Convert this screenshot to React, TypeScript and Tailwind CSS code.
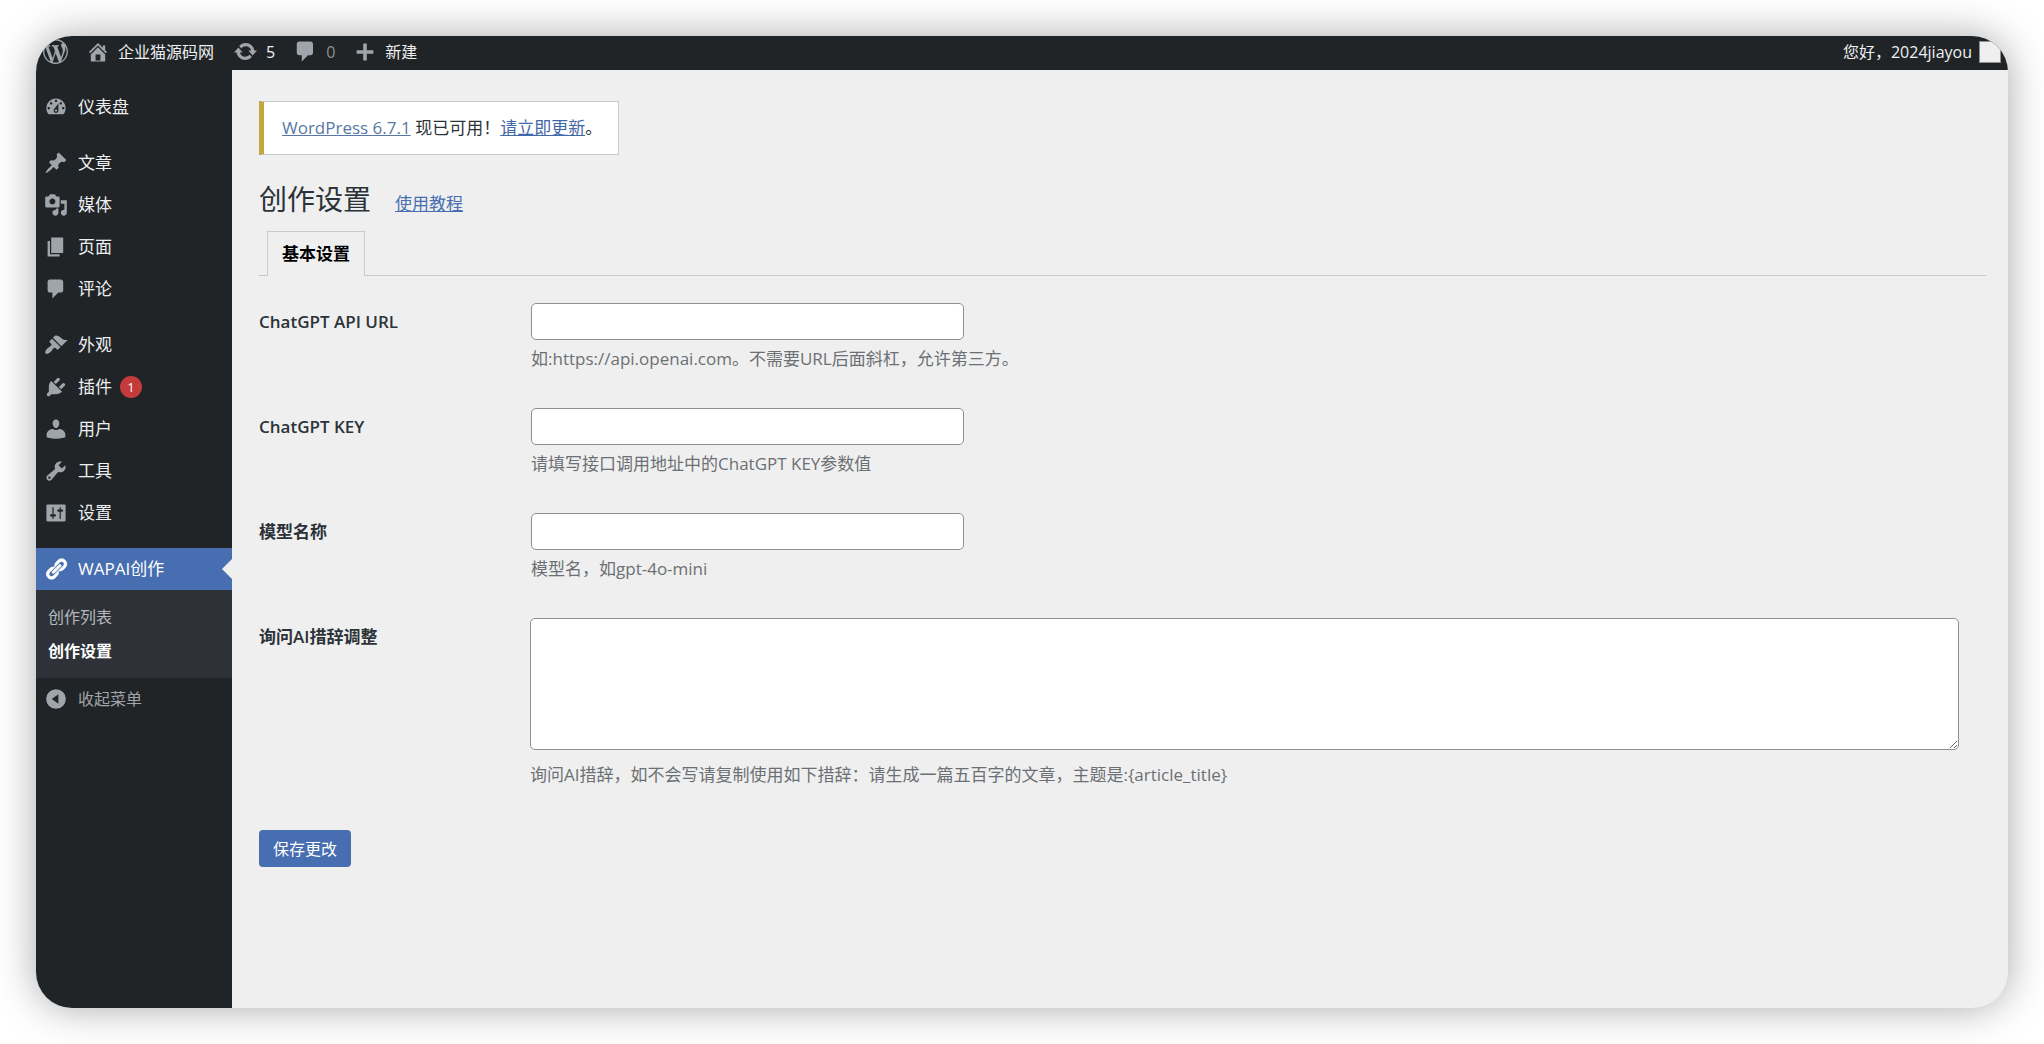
import React from "react";

const ICONS = {
  wordpress:
    "M20 10c0-5.51-4.49-10-10-10C4.48 0 0 4.49 0 10c0 5.52 4.48 10 10 10 5.51 0 10-4.48 10-10zM7.78 15.37L4.37 6.22c.55-.02 1.17-.08 1.17-.08.5-.06.44-1.13-.06-1.11 0 0-1.45.11-2.37.11-.18 0-.37 0-.58-.01C4.12 2.69 6.87 1.11 10 1.11c2.33 0 4.45.87 6.05 2.34-.68-.11-1.65.39-1.65 1.58 0 .74.45 1.36.9 2.1.35.61.55 1.36.55 2.46 0 1.49-1.4 5-1.4 5l-3.03-8.37c.54-.02.82-.17.82-.17.5-.05.44-1.25-.06-1.22 0 0-1.44.12-2.38.12-.87 0-2.33-.12-2.33-.12-.5-.03-.56 1.2-.06 1.22l.92.08 1.26 3.41zM17.41 10c.24-.64.74-1.87.43-4.25.7 1.29 1.05 2.71 1.05 4.25 0 3.29-1.73 6.24-4.4 7.78.97-2.59 1.94-5.2 2.92-7.78zM6.1 18.09C3.12 16.65 1.11 13.53 1.11 10c0-1.3.23-2.48.72-3.59C3.25 10.3 4.67 14.2 6.1 18.09zm4.03-6.63l2.58 6.98c-.86.29-1.76.45-2.71.45-.79 0-1.57-.11-2.29-.33.81-2.38 1.62-4.74 2.42-7.1z",
  home: "M16 8.5l1.53 1.53-1.06 1.06L10 4.6l-6.47 6.49-1.06-1.06L10 2.5l4 4v-2h2v4zm-6-2.46l6 5.99V18H4v-5.97zM12 17v-5H8v5h4z",
  update:
    "M10.2 3.28c3.53 0 6.43 2.61 6.92 6h2.08l-3.5 4-3.5-4h2.32c-.45-1.97-2.21-3.45-4.32-3.45-1.45 0-2.73.71-3.54 1.78L4.95 5.66C6.23 4.2 8.11 3.28 10.2 3.28zm-.4 13.44c-3.52 0-6.43-2.61-6.92-6H.8l3.5-4c1.17 1.33 2.33 2.67 3.5 4H5.48c.45 1.97 2.21 3.45 4.32 3.45 1.45 0 2.73-.71 3.54-1.78l1.71 1.95c-1.28 1.46-3.15 2.38-5.25 2.38z",
  plus: "M17 8.5v3h-5.5V17h-3v-5.5H3v-3h5.5V3h3v5.5z",
  dashboard:
    "M3.76 16h12.48c1.09-1.37 1.76-3.11 1.76-5 0-4.42-3.58-8-8-8s-8 3.58-8 8c0 1.89.67 3.63 1.76 5zM10 4c.55 0 1 .45 1 1s-.45 1-1 1-1-.45-1-1 .45-1 1-1zM6 6c.55 0 1 .45 1 1s-.45 1-1 1-1-.45-1-1 .45-1 1-1zm8 0c.55 0 1 .45 1 1s-.45 1-1 1-1-.45-1-1 .45-1 1-1zm-5.37 5.55L12 7v6c0 1.1-.9 2-2 2s-2-.9-2-2c0-.57.24-1.08.63-1.45zM4 10c.55 0 1 .45 1 1s-.45 1-1 1-1-.45-1-1 .45-1 1-1zm12 0c.55 0 1 .45 1 1s-.45 1-1 1-1-.45-1-1 .45-1 1-1zm-5 3c0-.55-.45-1-1-1s-1 .45-1 1 .45 1 1 1 1-.45 1-1z",
  post: "M10.44 3.02l1.82-1.82 6.36 6.35-1.83 1.82c-1.05-.68-2.48-.57-3.41.36l-.75.75c-.92.93-1.04 2.35-.35 3.41l-1.83 1.82-2.41-2.41-2.8 2.79c-.42.42-3.38 2.71-3.8 2.29s1.86-3.39 2.28-3.81l2.79-2.79L4.1 9.36l1.83-1.82c1.05.69 2.48.57 3.4-.36l.75-.75c.93-.92 1.05-2.35.36-3.41z",
  media:
    "M13 11V4c0-.55-.45-1-1-1h-1.67L9 1H5L3.67 3H2c-.55 0-1 .45-1 1v7c0 .55.45 1 1 1h10c.55 0 1-.45 1-1zM7 4.5c1.38 0 2.5 1.12 2.5 2.5S8.38 9.5 7 9.5 4.5 8.38 4.5 7 5.62 4.5 7 4.5zM14 6h5v10.5c0 1.38-1.12 2.5-2.5 2.5S14 17.88 14 16.5s1.12-2.5 2.5-2.5c.17 0 .34.02.5.05V9h-3V6zm-4 8.05V13h2v3.5c0 1.38-1.12 2.5-2.5 2.5S7 17.88 7 16.5 8.12 14 9.5 14c.17 0 .34.02.5.05z",
  page: "M6 15V2h10v13H6zm-1 1h8v2H3V5h2v11z",
  comments:
    "M5 2h9c1.1 0 2 .9 2 2v7c0 1.1-.9 2-2 2h-2l-5 5v-5H5c-1.1 0-2-.9-2-2V4c0-1.1.9-2 2-2z",
  appearance:
    "M14.48 11.06L7.41 3.99l1.5-1.5c.5-.56 2.3-.47 3.51.32 1.21.8 1.43 1.28 2.91 2.1 1.18.64 2.45 1.26 4.45.85zm-.71.71L6.7 4.7 4.93 6.47c-.39.39-.39 1.02 0 1.41l1.06 1.06c.39.39.39 1.03 0 1.42-.6.6-1.43 1.11-2.21 1.69-.35.26-.7.53-1.01.84C1.43 14.23.4 16.08 1.4 17.07c.99 1 2.84-.03 4.18-1.36.31-.31.58-.66.85-1.02.57-.78 1.08-1.61 1.69-2.21.39-.39 1.02-.39 1.41 0l1.06 1.06c.39.39 1.02.39 1.41 0z",
  plugins:
    "M13.11 4.36L9.87 7.6 8 5.73l3.24-3.24c.35-.34 1.05-.2 1.56.32.52.51.66 1.21.31 1.55zm-8 1.77l.91-1.12 9.01 9.01-1.19.84c-.71.71-2.63 1.16-3.82 1.16H6.14L4.9 17.26c-.59.59-1.54.59-2.12 0-.59-.58-.59-1.53 0-2.12l1.24-1.24v-3.88c0-1.13.4-3.19 1.09-3.89zm7.26 3.97l3.24-3.24c.34-.35 1.04-.21 1.55.31.52.51.66 1.21.31 1.55l-3.24 3.25z",
  users:
    "M10 9.25c-2.27 0-2.73-3.44-2.73-3.44C7 4.02 7.82 2 9.97 2c2.16 0 2.98 2.02 2.71 3.81 0 0-.41 3.44-2.68 3.44zM7.3 10c.8.55 1.7.85 2.7.85s1.9-.3 2.7-.85c2.6 0 5.1 2.3 5.1 4.5v2.3s-3.9 1.35-7.8 1.35-7.8-1.35-7.8-1.35v-2.3C2.2 12.3 4.7 10 7.3 10z",
  tools:
    "M16.68 9.77c-1.34 1.34-3.3 1.67-4.95.99l-5.41 6.52c-.99.99-2.59.99-3.58 0s-.99-2.59 0-3.57l6.52-5.42c-.68-1.65-.35-3.61.99-4.95 1.28-1.28 3.12-1.62 4.72-1.06l-2.89 2.89 2.82 2.82 2.86-2.87c.53 1.58.18 3.39-1.08 4.65zM3.81 16.21c.4.39 1.04.39 1.43 0 .4-.4.4-1.04 0-1.43-.39-.4-1.03-.4-1.43 0-.39.39-.39 1.03 0 1.43z",
  settings:
    "M18 16V4c0-.55-.45-1-1-1H3c-.55 0-1 .45-1 1v12c0 .55.45 1 1 1h14c.55 0 1-.45 1-1zM8 11h1c.55 0 1 .45 1 1s-.45 1-1 1H8v1.5c0 .28-.22.5-.5.5s-.5-.22-.5-.5V13H6c-.55 0-1-.45-1-1s.45-1 1-1h1V5.5c0-.28.22-.5.5-.5s.5.22.5.5V11zm5-2h-1c-.55 0-1-.45-1-1s.45-1 1-1h1V5.5c0-.28.22-.5.5-.5s.5.22.5.5V7h1c.55 0 1 .45 1 1s-.45 1-1 1h-1v5.5c0 .28-.22.5-.5.5s-.5-.22-.5-.5V9z",
  links:
    "M17.74 2.76c1.68 1.69 1.68 4.41 0 6.1l-1.53 1.52c-1.12 1.12-2.7 1.47-4.14 1.09l2.62-2.61.76-.77.76-.76c.84-.84.84-2.2 0-3.04-.84-.85-2.2-.85-3.04 0l-.77.76-3.38 3.38c-.37-1.44-.02-3.02 1.1-4.14l1.52-1.53c1.69-1.68 4.42-1.68 6.1 0zM8.59 13.43l5.34-5.34c.42-.42.42-1.1 0-1.52-.44-.43-1.13-.39-1.53 0l-5.33 5.34c-.42.42-.42 1.1 0 1.52.44.43 1.13.39 1.52 0zm-.76 2.29l4.14-4.15c.38 1.44.03 3.02-1.09 4.14l-1.52 1.53c-1.69 1.68-4.41 1.68-6.1 0-1.68-1.68-1.68-4.42 0-6.1l1.53-1.52c1.12-1.12 2.7-1.47 4.14-1.1l-4.14 4.15c-.85.84-.85 2.2 0 3.05.84.84 2.2.84 3.04 0z",
  collapse: "M10 1.8a8.2 8.2 0 1 0 0 16.4a8.2 8.2 0 1 0 0-16.4zM12 6v8l-5.5-4z",
};

type IconName = keyof typeof ICONS;

function Icon({ name, className }: { name: IconName; className: string }) {
  return (
    <svg viewBox="0 0 20 20" fill="currentColor" fillRule="evenodd" aria-hidden="true" className={`shrink-0 ${className}`}>
      <path d={ICONS[name]} />
    </svg>
  );
}

const MENU_GROUPS: { icon: IconName; label: string; count?: number }[][] = [
  [{ icon: "dashboard", label: "仪表盘" }],
  [
    { icon: "post", label: "文章" },
    { icon: "media", label: "媒体" },
    { icon: "page", label: "页面" },
    { icon: "comments", label: "评论" },
  ],
  [
    { icon: "appearance", label: "外观" },
    { icon: "plugins", label: "插件", count: 1 },
    { icon: "users", label: "用户" },
    { icon: "tools", label: "工具" },
    { icon: "settings", label: "设置" },
  ],
];

const TEXT_FIELDS = [
  { id: "api-url", label: "ChatGPT API URL", hint: "如:https://api.openai.com。不需要URL后面斜杠，允许第三方。" },
  { id: "api-key", label: "ChatGPT KEY", hint: "请填写接口调用地址中的ChatGPT KEY参数值" },
  { id: "model", label: "模型名称", hint: "模型名，如gpt-4o-mini" },
];

function AdminBar() {
  return (
    <header className="flex h-[34px] shrink-0 items-center justify-between bg-[#202427] pr-[7px] pb-[3px] pl-[7px] text-base leading-6 text-[#eeeff0]">
      <nav aria-label="工具栏" className="flex items-center">
        <a href="#" aria-label="关于 WordPress">
          <Icon name="wordpress" className="size-[25px] text-[#a0a5ab]" />
        </a>
        <a href="#" className="ml-[18px] flex items-center gap-2">
          <Icon name="home" className="size-6 text-[#a0a5ab]" />
          企业猫源码网
        </a>
        <a href="#" className="ml-[19px] flex items-center gap-2">
          <Icon name="update" className="size-[25px] text-[#a0a5ab]" />
          5
        </a>
        <a href="#" className="ml-[18px] flex items-center gap-2 text-[#8a8f95]">
          <Icon name="comments" className="size-[25px] text-[#a0a5ab]" />
          0
        </a>
        <a href="#" className="ml-[18px] flex items-center gap-2">
          <Icon name="plus" className="size-6 text-[#a0a5ab]" />
          新建
        </a>
      </nav>
      <a href="#" className="flex items-center gap-[7px]">
        您好，2024jiayou
        <span className="size-[22px] border border-[#8c8f94] bg-[#efeff0]" />
      </a>
    </header>
  );
}

function Sidebar() {
  return (
    <aside className="w-[196px] shrink-0 bg-[#202427] pt-4 text-[17px] leading-6 text-[#eeeff0]">
      <nav aria-label="主菜单">
        {MENU_GROUPS.map((group, i) => (
          <ul key={i} className="mb-3.5">
            {group.map((item) => (
              <li key={item.label}>
                <a href="#" className="flex h-[42px] items-center gap-2.5 pl-2">
                  <Icon name={item.icon} className="size-6 text-[#a0a5ab]" />
                  {item.label}
                  {item.count !== undefined && (
                    <span className="-ml-0.5 flex size-[22px] items-center justify-center rounded-full bg-[#c53a3a] text-[13px] text-white">
                      {item.count}
                    </span>
                  )}
                </a>
              </li>
            ))}
          </ul>
        ))}
        <a href="#" className="relative flex h-[42px] items-center gap-2.5 bg-[#466eb0] pl-2 text-white">
          <Icon name="links" className="size-6 stroke-white stroke-[0.6]" />
          WAPAI创作
          <span className="absolute top-[11px] right-0 border-y-10 border-r-10 border-y-transparent border-r-[#efeff0]" />
        </a>
        <ul className="bg-[#2e3238] py-2.5 text-base leading-[34px]">
          <li>
            <a href="#" className="block pl-3 text-[#b4b8bd]">
              创作列表
            </a>
          </li>
          <li>
            <a href="#" aria-current="page" className="block pl-3 font-semibold text-white">
              创作设置
            </a>
          </li>
        </ul>
      </nav>
      <button type="button" className="flex h-[42px] w-full items-center gap-2.5 pl-2 text-base text-[#a0a5ab]">
        <Icon name="collapse" className="size-6" />
        收起菜单
      </button>
    </aside>
  );
}

function SettingsForm() {
  return (
    <form onSubmit={(e) => e.preventDefault()}>
      <table className="mt-2 w-full table-fixed">
        <colgroup>
          <col className="w-[271px]" />
          <col />
        </colgroup>
        <tbody>
          {TEXT_FIELDS.map((field) => (
            <tr key={field.id}>
              <th scope="row" className="pt-[26px] text-left align-top font-semibold">
                <label htmlFor={field.id}>{field.label}</label>
              </th>
              <td className="pt-[19px] pb-[18px] pl-px align-top">
                <input
                  id={field.id}
                  type="text"
                  className="block h-[37px] w-[433px] max-w-full rounded-[5px] border border-[#8c8f94] bg-white px-2.5"
                />
                <p className="mt-[7px] text-[#6c6f73]">{field.hint}</p>
              </td>
            </tr>
          ))}
          <tr>
            <th scope="row" className="pt-[26px] text-left align-top font-semibold">
              <label htmlFor="prompt">询问AI措辞调整</label>
            </th>
            <td className="pt-[19px] pr-[27px] align-top">
              <textarea
                id="prompt"
                className="block h-[132px] w-full rounded-[5px] border border-[#8c8f94] bg-white px-2.5 py-1"
              />
              <p className="mt-[13px] text-[#6c6f73]">
                询问AI措辞，如不会写请复制使用如下措辞：请生成一篇五百字的文章，主题是:{"{article_title}"}
              </p>
            </td>
          </tr>
        </tbody>
      </table>
      <button type="submit" className="mt-[43px] h-[37px] rounded-[4px] bg-[#466eb0] px-3.5 text-base text-white">
        保存更改
      </button>
    </form>
  );
}

export default function App() {
  return (
    <div className="flex min-h-screen flex-col bg-white p-9 font-['Open_Sans','Noto_Sans_CJK_SC',sans-serif]">
      <div className="flex flex-1 flex-col overflow-hidden rounded-[36px] bg-[#efeff0] shadow-[0_0_40px_rgba(0,0,0,0.34)]">
        <AdminBar />
        <div className="flex flex-1">
          <Sidebar />
          <main className="min-w-0 flex-1 pt-[31px] pr-[22px] pl-[27px] text-[17px] leading-6 text-[#2c3338]">
            <div className="w-fit border border-l-5 border-[#c9cacd] border-l-[#c4a73b] bg-white py-3.5 pr-4 pl-[18px]">
              <a href="#" className="text-[#5778a5] underline">
                WordPress 6.7.1
              </a>{" "}
              现已可用！
              <a href="#" className="text-[#3f68a8] underline">
                请立即更新
              </a>
              。
            </div>
            <div className="mt-6 flex items-baseline gap-6">
              <h1 className="text-[28px] leading-10">创作设置</h1>
              <a href="#" className="text-[#466eb0] underline">
                使用教程
              </a>
            </div>
            <nav aria-label="设置选项卡" className="mt-3 flex border-b border-[#c9cacd] pl-2">
              <a
                href="#"
                aria-current="page"
                className="-mb-px border border-b-0 border-[#c9cacd] bg-[#efeff0] px-3.5 py-2.5 font-semibold text-black"
              >
                基本设置
              </a>
            </nav>
            <SettingsForm />
          </main>
        </div>
      </div>
    </div>
  );
}
